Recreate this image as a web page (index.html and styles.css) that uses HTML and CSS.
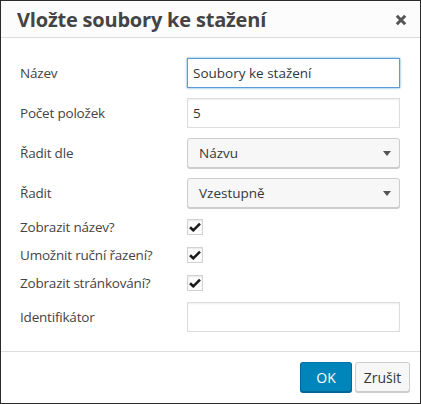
FILE: index.html
```html
<!DOCTYPE html>
<html lang="cs">
<head>
<meta charset="utf-8">
<link rel="stylesheet" href="styles.css">
</head>
<body>
<div class="dialog">
  <div class="head">
    <div class="title">Vložte soubory ke stažení</div>
    <svg class="close" width="12" height="12" viewBox="0 0 12 12"><path d="M1.8 1.8 L10.2 10.2 M10.2 1.8 L1.8 10.2" stroke="#555" stroke-width="3" stroke-linecap="butt"/></svg>
  </div>
  <div class="body">
    <div class="row"><label class="lbl">Název</label><div class="input focus">Soubory ke stažení</div></div>
    <div class="row"><label class="lbl">Počet položek</label><div class="input">5</div></div>
    <div class="row"><label class="lbl">Řadit dle</label><div class="select"><span>Názvu</span><i class="arrow"></i></div></div>
    <div class="row"><label class="lbl">Řadit</label><div class="select"><span>Vzestupně</span><i class="arrow"></i></div></div>
    <div class="row cbrow"><label class="lbl">Zobrazit název?</label><div class="cb"><svg width="12" height="10" viewBox="0 0 12 10"><path d="M1 5.2 L4.3 8.3 L11 1.6" fill="none" stroke="#1d1d1d" stroke-width="2.6"/></svg></div></div>
    <div class="row cbrow"><label class="lbl">Umožnit ruční řazení?</label><div class="cb"><svg width="12" height="10" viewBox="0 0 12 10"><path d="M1 5.2 L4.3 8.3 L11 1.6" fill="none" stroke="#1d1d1d" stroke-width="2.6"/></svg></div></div>
    <div class="row cbrow"><label class="lbl">Zobrazit stránkování?</label><div class="cb"><svg width="12" height="10" viewBox="0 0 12 10"><path d="M1 5.2 L4.3 8.3 L11 1.6" fill="none" stroke="#1d1d1d" stroke-width="2.6"/></svg></div></div>
    <div class="row"><label class="lbl">Identifikátor</label><div class="input"></div></div>
  </div>
  <div class="foot">
    <button class="btn primary">OK</button>
    <button class="btn cancel">Zrušit</button>
  </div>
</div>
</body>
</html>
```

FILE: styles.css
```css
html, body { margin: 0; padding: 0; }
body {
  background: #2a2a2a;
  padding: 1px;
  width: 419px;
  height: 402px;
  font-family: "Open Sans", "Noto Sans", sans-serif;
  color: #444;
}
.dialog {
  width: 419px;
  height: 402px;
  background: #fff;
  display: flex;
  flex-direction: column;
}
.head {
  height: 36px;
  background: #fcfcfc;
  border-bottom: 1px solid #dcdcdc;
  display: flex;
  align-items: center;
  justify-content: space-between;
  padding: 0 13px 0 16px;
}
.title {
  font-size: 20px;
  font-weight: bold;
  color: #444;
  letter-spacing: -0.2px;
}
.close { display: block; margin-top: 1px; }
.body {
  padding: 20px 20px 19px 19px;
  display: flex;
  flex-direction: column;
  gap: 10px;
  border-bottom: 1px solid #dddddd;
}
.row { display: flex; align-items: center; height: 30px; }
.cbrow { height: 18px; }
.lbl {
  width: 167px;
  font-size: 13.5px;
  letter-spacing: -0.2px;
  color: #444;
}
.input {
  box-sizing: border-box;
  width: 213px;
  height: 30px;
  border: 1px solid #ddd;
  box-shadow: inset 0 1px 2px rgba(0,0,0,0.07);
  padding: 0 5px;
  font-size: 13.5px;
  line-height: 28px;
  color: #32373c;
}
.input.focus {
  border-color: #5b9dd9;
  box-shadow: 0 0 2px rgba(30,140,190,0.8);
}
.select {
  box-sizing: border-box;
  width: 213px;
  height: 30px;
  border: 1px solid #ccc;
  border-radius: 3px;
  background: #f7f7f7;
  box-shadow: 0 1px 0 #ccc;
  display: flex;
  align-items: center;
  justify-content: space-between;
  padding: 0 8px 0 11px;
  font-size: 13.5px;
  color: #32373c;
}
.arrow {
  width: 0; height: 0;
  border-left: 4px solid transparent;
  border-right: 4px solid transparent;
  border-top: 5px solid #555;
  margin-top: 1px;
}
.cb {
  box-sizing: border-box;
  width: 16px;
  height: 16px;
  border: 1px solid #cfd3d6;
  background: #fefefe;
  box-shadow: inset 0 1px 2px rgba(0,0,0,0.1);
  display: flex;
  align-items: center;
  justify-content: center;
}
.cb svg { display: block; }
.foot {
  flex: 1;
  display: flex;
  justify-content: flex-end;
  align-items: flex-start;
  padding: 10px 10px 0 0;
  gap: 3px;
}
.btn {
  box-sizing: border-box;
  height: 30px;
  font-family: inherit;
  font-size: 14px;
  border: 1px solid #ccc;
  border-radius: 3px;
  background: #f7f7f7;
  color: #32373c;
  box-shadow: 0 1px 0 #ccc;
  padding: 0;
  margin: 0;
}
.btn.cancel { width: 55px; }
.btn.primary {
  width: 52px;
  background: #0085ba;
  border-color: #0073aa #006799 #006799;
  box-shadow: 0 1px 0 #006799;
  color: #fff;
}
```
